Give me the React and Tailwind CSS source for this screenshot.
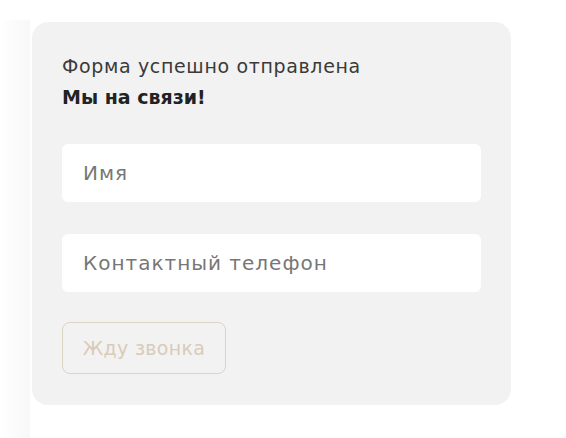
export default function App() {
  return (
    <div
      className="flex h-[438px] w-[566px] bg-white"
      style={{ fontFamily: '"DejaVu Sans", "Open Sans", sans-serif' }}
    >
      {/* faint edge of the neighbouring block */}
      <div className="mt-[20px] h-[418px] w-[30px] shrink-0 bg-gradient-to-r from-white via-[#fbfbfb] to-[#f8f8f8]" />
      <div className="w-[2px] shrink-0" />
      <div className="mt-[22px] h-[383px] w-[479px] rounded-[16px] bg-[#f2f2f2] px-[30px] pt-[31px]">
        <p className="text-[19px] leading-[26px] tracking-[0.65px] text-[#3a3a3a]">
          Форма успешно отправлена
        </p>
        <p className="mt-[4px] text-[19px] leading-[28px] font-bold text-[#222]">
          Мы на связи!
        </p>

        <form className="mt-[33px] flex flex-col gap-[32px]">
          <input
            type="text"
            placeholder="Имя"
            className="h-[58px] w-[419px] rounded-[6px] bg-white px-[21px] text-[20px] tracking-[1px] text-[#333] outline-none placeholder:text-[#777]"
          />
          <input
            type="tel"
            placeholder="Контактный телефон"
            className="h-[58px] w-[419px] rounded-[6px] bg-white px-[21px] text-[20px] tracking-[1px] text-[#333] outline-none placeholder:text-[#777]"
          />
          <button
            type="button"
            className="-mt-[2px] h-[52px] w-[164px] rounded-[8px] border border-[#ddd3c3] text-[19px] tracking-[0.3px] text-[#d9cbb8]"
          >
            Жду звонка
          </button>
        </form>
      </div>
    </div>
  );
}
